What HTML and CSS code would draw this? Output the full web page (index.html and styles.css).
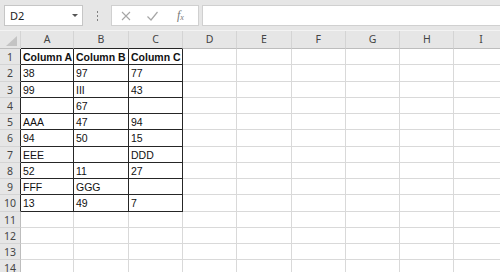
FILE: index.html
```html
<!DOCTYPE html>
<html>
<head>
<meta charset="utf-8">
<link rel="stylesheet" href="styles.css">
</head>
<body>
<div class="toolbar">
  <div class="namebox"><span class="ref">D2</span><span class="caret"></span></div>
  <div class="dots"><i></i><i></i><i></i></div>
  <div class="fbtns">
    <svg class="ic" width="12" height="12" viewBox="0 0 12 12"><path d="M2 2L10 10M10 2L2 10" stroke="#a6a6a6" stroke-width="1.1" fill="none"/></svg>
    <svg class="ic" width="13" height="12" viewBox="0 0 13 12"><path d="M1.5 6.5L5 10L11.5 2" stroke="#a6a6a6" stroke-width="1.2" fill="none"/></svg>
    <span class="fx">f<sub>x</sub></span>
  </div>
  <div class="finput"></div>
</div>
<div class="grid" id="grid"></div>
<script src="app.js"></script>
</body>
</html>
```
FILE: app.js
```js
var data = [
  ["Column A","Column B","Column C"],
  ["38","97","77"],
  ["99","III","43"],
  ["","67",""],
  ["AAA","47","94"],
  ["94","50","15"],
  ["EEE","","DDD"],
  ["52","11","27"],
  ["FFF","GGG",""],
  ["13","49","7"]
];
var cols = ["A","B","C","D","E","F","G","H","I"];
var g = document.getElementById("grid");
function el(cls, txt) {
  var d = document.createElement("div");
  d.className = cls;
  if (txt) d.textContent = txt;
  g.appendChild(d);
}
el("corner", "");
g.lastChild.innerHTML = '<svg class="tri" width="11" height="10" viewBox="0 0 11 10"><path d="M11 0L11 10L0 10Z" fill="#c4c4c4"/></svg>';
cols.forEach(function (c, i) { el("ch" + (i < 3 ? " chb" : ""), c); });
for (var r = 1; r <= 14; r++) {
  el("rh" + (r <= 10 ? " rhb" : ""), String(r));
  for (var c = 0; c < 9; c++) {
    var inT = r <= 10 && c < 3;
    var t = inT ? data[r - 1][c] : "";
    var cls = "cell" + (inT ? " tb" : "") + (inT && r === 1 ? " bold" : "") + (r <= 10 && c === 3 ? " afterT" : "");
    el(cls, t);
  }
}
```
FILE: styles.css
```css
html, body { margin: 0; padding: 0; }
body {
  width: 500px;
  height: 272px;
  overflow: hidden;
  background: #ffffff;
  font-family: "Liberation Sans", Arial, sans-serif;
}
.toolbar {
  height: 31px;
  background: #e6e6e6;
  border-bottom: 1px solid #f3f3f3;
  display: flex;
  align-items: flex-start;
  padding-top: 5px;
  box-sizing: border-box;
}
.namebox {
  margin-left: 4px;
  width: 79px;
  height: 21px;
  box-sizing: border-box;
  background: #fff;
  border: 1px solid #c6c6c6;
  display: flex;
  align-items: center;
  justify-content: space-between;
  padding: 0 4px 0 5px;
  font-family: "Noto Sans", "Open Sans", sans-serif;
  font-size: 11px;
  color: #222;
}
.caret {
  width: 0; height: 0;
  border-left: 3px solid transparent;
  border-right: 3px solid transparent;
  border-top: 3px solid #555;
}
.dots {
  width: 28px;
  height: 21px;
  display: flex;
  flex-direction: column;
  align-items: center;
  justify-content: center;
  gap: 2px;
}
.dots i {
  display: block;
  width: 1px; height: 2px;
  background: #808080;
}
.fbtns {
  width: 88px;
  height: 21px;
  box-sizing: border-box;
  background: #fff;
  border: 1px solid #d0d0d0;
  display: flex;
  align-items: center;
  padding-left: 8px;
  gap: 14px;
}
.fx {
  font-family: "Liberation Serif", "DejaVu Serif", serif;
  font-style: italic;
  font-size: 12px;
  color: #777;
  margin-left: 4px;
}
.fx sub { font-size: 8px; vertical-align: -1px; }
.finput {
  margin-left: 3px;
  flex: 1;
  height: 21px;
  background: #fff;
  border: 1px solid #d0d0d0;
  border-right: none;
  box-sizing: border-box;
}
.grid {
  display: grid;
  grid-template-columns: 21px 53px 55px 54px repeat(6, 54.3px);
  grid-template-rows: 18px repeat(14, 16.25px);
}
.grid > div { box-sizing: border-box; overflow: hidden; white-space: nowrap; }
.corner {
  background: #e6e6e6;
  border-right: 1px solid #d4d4d4;
  border-bottom: 1px solid #bdbdbd;
  position: relative;
}
.tri { position: absolute; right: 3px; bottom: 2px; }
.ch {
  background: #e6e6e6;
  border-right: 1px solid #d4d4d4;
  border-bottom: 1px solid #bdbdbd;
  font-family: "Noto Sans", "Open Sans", sans-serif;
  font-size: 10.5px;
  color: #444;
  text-align: center;
  line-height: 17px;
}
.chb { border-bottom-color: #262626; }
.rh {
  background: #e6e6e6;
  border-right: 1px solid #bdbdbd;
  border-bottom: 1px solid #d4d4d4;
  font-family: "Noto Sans", "Open Sans", sans-serif;
  font-size: 10.5px;
  color: #444;
  text-align: center;
  line-height: 16px;
}
.rhb { border-right-color: #262626; }
.cell {
  border-right: 1px solid #d9d9d9;
  border-bottom: 1px solid #d9d9d9;
  font-size: 10.5px;
  color: #111;
  padding-left: 2px;
  line-height: 16px;
}
.cell.tb {
  border-right-color: #262626;
  border-bottom-color: #262626;
}
.bold { font-weight: bold; }
```
